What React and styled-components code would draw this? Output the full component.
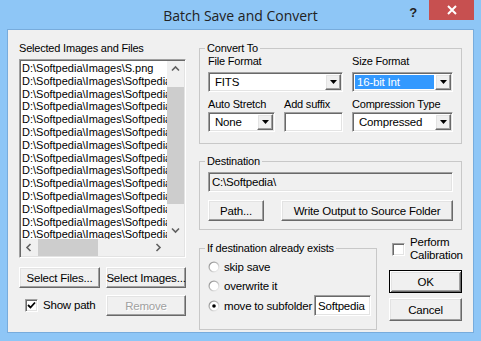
import styled, { createGlobalStyle } from 'styled-components'

const frameBlue = '#8ec6f6'
const face = '#f0f0f0'

const GlobalStyle = createGlobalStyle`
  html, body { margin: 0; padding: 0; }
  body {
    background: ${frameBlue};
    font-family: "Liberation Sans", Arial, sans-serif;
    font-size: 11px;
    letter-spacing: -0.2px;
    color: #000;
  }
`

const Window = styled.div`
  width: 481px;
  height: 341px;
  background: ${frameBlue};
  display: flex;
  flex-direction: column;
`

const TitleBar = styled.div`
  height: 29px;
  display: grid;
  grid-template-columns: 1fr auto 1fr;
`

const Title = styled.div`
  grid-column: 2;
  align-self: center;
  font-family: "Open Sans", "Noto Sans", sans-serif;
  font-size: 14px;
  letter-spacing: 0;
  color: #222;
  padding-top: 1px;
`

const Controls = styled.div`
  grid-column: 3;
  display: flex;
  justify-content: flex-end;
  align-items: flex-start;
`

const HelpBtn = styled.div`
  font-weight: bold;
  font-size: 13px;
  color: #222;
  margin: 5px 12px 0 0;
`

const CloseBtn = styled.div`
  width: 45px;
  height: 20px;
  margin-right: 7px;
  background: #c75050;
  display: flex;
  align-items: center;
  justify-content: center;
`

const Client = styled.div`
  flex: 1;
  margin: 0 7px 8px;
  border: 1px solid #78acdc;
  background: ${face};
  display: flex;
  gap: 13px;
  padding: 12px 11px 0 11px;
`

const LeftCol = styled.div`
  width: 167px;
  display: flex;
  flex-direction: column;
`

const RightCol = styled.div`
  width: 263px;
  display: flex;
  flex-direction: column;
`

const Label = styled.div`
  line-height: 13px;
  height: 13px;
  white-space: nowrap;
  margin-bottom: ${p => p.$gap ?? 0}px;
`

const sunken = `
  border: 1px solid;
  border-color: #a0a0a0 #ffffff #ffffff #a0a0a0;
  box-shadow: inset 1px 1px 0 #696969, inset -1px -1px 0 #e3e3e3;
  padding: 1px;
  box-sizing: border-box;
`

const raised = `
  border: 1px solid;
  border-color: #ffffff #696969 #696969 #ffffff;
  box-shadow: inset -1px -1px 0 #a0a0a0, inset 1px 1px 0 #e3e3e3;
  box-sizing: border-box;
`

const ListBox = styled.div`
  ${sunken}
  margin-top: 4px;
  width: 167px;
  height: 199px;
  background: #fff;
  display: grid;
  grid-template-columns: 1fr 17px;
  grid-template-rows: 1fr 17px;
`

const Items = styled.div`
  overflow: hidden;
  padding: 1px 0 0 1px;
  letter-spacing: 0;
`

const Item = styled.div`
  line-height: 12.8px;
  white-space: nowrap;
`

const VScroll = styled.div`
  background: ${face};
  display: flex;
  flex-direction: column;
`

const HScroll = styled.div`
  background: ${face};
  display: flex;
`

const Corner = styled.div`
  background: ${face};
`

const Arrow = styled.div`
  width: 17px;
  height: 17px;
  flex: none;
  display: flex;
  align-items: center;
  justify-content: center;
`

const VTrack = styled.div`
  flex: 1;
  padding-top: 9px;
`

const HTrack = styled.div`
  flex: 1;
`

const Thumb = styled.div`
  background: #cdcdcd;
  width: ${p => p.$w}px;
  height: ${p => p.$h}px;
`

const Button = styled.div`
  ${raised}
  width: ${p => p.$w}px;
  height: ${p => p.$h ?? 21}px;
  background: ${face};
  display: flex;
  align-items: center;
  justify-content: center;
  white-space: nowrap;
  font-size: 11.5px;
  color: ${p => p.$disabled ? '#a0a0a0' : '#000'};
  text-shadow: ${p => p.$disabled ? '1px 1px 0 #fff' : 'none'};
  ${p => p.$default && `
    border: 1px solid #000;
    box-shadow: inset 1px 1px 0 #fff, inset -1px -1px 0 #696969, inset 2px 2px 0 #e3e3e3, inset -2px -2px 0 #a0a0a0;
  `}
`

const ButtonRow = styled.div`
  display: flex;
  justify-content: space-between;
  margin-top: ${p => p.$mt}px;
`

const CheckRow = styled.label`
  display: flex;
  align-items: center;
  gap: 5px;
  padding-left: ${p => p.$pl ?? 0}px;
  line-height: 13px;
  font-size: 11.5px;
`

const Box = styled.span`
  ${sunken}
  width: 13px;
  height: 13px;
  background: #fff;
  flex: none;
  display: flex;
  align-items: center;
  justify-content: center;
`

const Group = styled.fieldset`
  margin: ${p => p.$mt ?? 0}px 0 0 0;
  padding: ${p => p.$pt ?? 0}px 8px ${p => p.$pb}px 8px;
  border: 1px solid #c8c8c8;
  min-width: 0;
  width: ${p => p.$w ?? 263}px;
  box-sizing: border-box;
`

const Legend = styled.legend`
  padding: 0 2px;
  margin-left: -3px;
  line-height: 13px;
`

const ConvertGrid = styled.div`
  display: grid;
  grid-template-columns: 67px 59px 101px;
  column-gap: 9px;
  row-gap: 6px;
`

const Field = styled.div`
  display: flex;
  flex-direction: column;
  grid-column: ${p => p.$span ? 'span 2' : 'auto'};
`

const Combo = styled.div`
  ${sunken}
  height: 20px;
  background: #fff;
  display: flex;
  align-items: stretch;
`

const ComboText = styled.div`
  flex: 1;
  display: flex;
  align-items: center;
  padding-left: ${p => p.$selected ? 1 : 3}px;
  white-space: nowrap;
  overflow: hidden;
  font-size: 11.5px;
  span {
    padding: 1px 2px;
    background: ${p => p.$selected ? '#3399ff' : 'transparent'};
    color: ${p => p.$selected ? '#fff' : '#000'};
    flex: ${p => p.$selected ? 1 : 'none'};
    margin-right: ${p => p.$selected ? 1 : 0}px;
  }
`

const DropBtn = styled.div`
  ${raised}
  width: 16px;
  background: ${face};
  display: flex;
  align-items: center;
  justify-content: center;
`

const TextBox = styled.div`
  ${sunken}
  height: ${p => p.$h ?? 20}px;
  width: ${p => p.$w ? `${p.$w}px` : 'auto'};
  flex: none;
  margin-left: ${p => p.$ml ?? 0}px;
  background: ${p => p.$readonly ? face : '#fff'};
  display: flex;
  align-items: center;
  padding-left: 3px;
  font-size: 11.5px;
  white-space: nowrap;
`

const BottomRow = styled.div`
  display: flex;
  align-items: flex-start;
  gap: 12px;
  margin-top: 6px;
`

const RadioRow = styled.div`
  display: flex;
  align-items: center;
  gap: 4px;
  height: ${p => p.$h ?? 19}px;
  font-size: 11.5px;
  white-space: nowrap;
`

const SideCol = styled.div`
  width: 73px;
  display: flex;
  flex-direction: column;
`

const CalibLabel = styled.div`
  line-height: 13px;
`

const Chevron = ({ dir }) => {
  const paths = {
    up: 'M1 5.5 L4.5 2 L8 5.5',
    down: 'M1 2.5 L4.5 6 L8 2.5',
    left: 'M5.5 1 L2 4.5 L5.5 8',
    right: 'M2.5 1 L6 4.5 L2.5 8',
  }
  return (
    <svg width="9" height="9" viewBox="0 0 9 9">
      <path d={paths[dir]} fill="none" stroke="#606060" strokeWidth="1.6" />
    </svg>
  )
}

const Triangle = () => (
  <svg width="7" height="4" viewBox="0 0 7 4">
    <path d="M0 0 H7 L3.5 4 Z" fill="#000" />
  </svg>
)

const Check = () => (
  <svg width="9" height="9" viewBox="0 0 9 9">
    <path d="M1 4 L3.5 6.5 L8 1.5" fill="none" stroke="#000" strokeWidth="1.8" />
  </svg>
)

const Radio = ({ checked }) => (
  <svg width="12" height="12" viewBox="0 0 12 12" style={{ flex: 'none' }}>
    <defs>
      <linearGradient id="rg" x1="0" y1="0" x2="1" y2="1">
        <stop offset="0" stopColor="#808080" />
        <stop offset="1" stopColor="#ffffff" />
      </linearGradient>
    </defs>
    <circle cx="6" cy="6" r="5.5" fill="url(#rg)" />
    <circle cx="6" cy="6" r="4.3" fill="#fff" />
    {checked && <circle cx="6" cy="6" r="1.8" fill="#000" />}
  </svg>
)

const ComboBox = ({ value, selected }) => (
  <Combo>
    <ComboText $selected={selected}><span>{value}</span></ComboText>
    <DropBtn><Triangle /></DropBtn>
  </Combo>
)

const files = [
  'D:\\Softpedia\\Images\\S.png',
  ...Array(13).fill('D:\\Softpedia\\Images\\Softpedia'),
]

export default function App() {
  return (
    <>
      <GlobalStyle />
      <Window>
        <TitleBar>
          <Title>Batch Save and Convert</Title>
          <Controls>
            <HelpBtn>?</HelpBtn>
            <CloseBtn>
              <svg width="10" height="10" viewBox="0 0 10 10">
                <path d="M1 1 L9 9 M9 1 L1 9" stroke="#fff" strokeWidth="2" />
              </svg>
            </CloseBtn>
          </Controls>
        </TitleBar>

        <Client>
          <LeftCol>
            <Label>Selected Images and Files</Label>
            <ListBox>
              <Items>
                {files.map((f, i) => <Item key={i}>{f}</Item>)}
              </Items>
              <VScroll>
                <Arrow><Chevron dir="up" /></Arrow>
                <VTrack><Thumb $w={17} $h={117} /></VTrack>
                <Arrow><Chevron dir="down" /></Arrow>
              </VScroll>
              <HScroll>
                <Arrow><Chevron dir="left" /></Arrow>
                <HTrack><Thumb $w={60} $h={17} /></HTrack>
                <Arrow><Chevron dir="right" /></Arrow>
              </HScroll>
              <Corner />
            </ListBox>

            <ButtonRow $mt={9}>
              <Button $w={81}>Select Files...</Button>
              <Button $w={80}>Select Images...</Button>
            </ButtonRow>
            <ButtonRow $mt={7}>
              <CheckRow $pl={6}>
                <Box><Check /></Box>
                <span>Show path</span>
              </CheckRow>
              <Button $w={80} $disabled>Remove</Button>
            </ButtonRow>
          </LeftCol>

          <RightCol>
            <Group $pb={11}>
              <Legend>Convert To</Legend>
              <ConvertGrid>
                <Field $span>
                  <Label $gap={4}>File Format</Label>
                  <ComboBox value="FITS" />
                </Field>
                <Field>
                  <Label $gap={4}>Size Format</Label>
                  <ComboBox value="16-bit Int" selected />
                </Field>
                <Field>
                  <Label $gap={1}>Auto Stretch</Label>
                  <ComboBox value="None" />
                </Field>
                <Field>
                  <Label $gap={1}>Add suffix</Label>
                  <TextBox />
                </Field>
                <Field>
                  <Label $gap={1}>Compression Type</Label>
                  <ComboBox value="Compressed" />
                </Field>
              </ConvertGrid>
            </Group>

            <Group $mt={11} $pt={4} $pb={8}>
              <Legend>Destination</Legend>
              <TextBox $readonly>C:\Softpedia\</TextBox>
              <ButtonRow $mt={8}>
                <Button $w={56}>Path...</Button>
                <Button $w={172}>Write Output to Source Folder</Button>
              </ButtonRow>
            </Group>

            <BottomRow>
              <Group $w={178} $mt={6} $pt={2} $pb={13}>
                <Legend>If destination already exists</Legend>
                <RadioRow><Radio /> skip save</RadioRow>
                <RadioRow><Radio /> overwrite it</RadioRow>
                <RadioRow $h={21}>
                  <Radio checked /> move to subfolder
                  <TextBox $w={57} $h={21} $ml={-2}>Softpedia</TextBox>
                </RadioRow>
              </Group>
              <SideCol>
                <CheckRow $pl={3}>
                  <Box />
                  <CalibLabel>Perform<br />Calibration</CalibLabel>
                </CheckRow>
                <ButtonRow $mt={8}>
                  <Button $w={73} $h={23} $default>OK</Button>
                </ButtonRow>
                <ButtonRow $mt={5}>
                  <Button $w={73} $h={23}>Cancel</Button>
                </ButtonRow>
              </SideCol>
            </BottomRow>
          </RightCol>
        </Client>
      </Window>
    </>
  )
}
